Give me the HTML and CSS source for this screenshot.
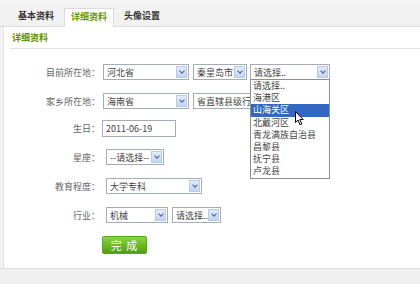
FILE: index.html
```html
<!DOCTYPE html>
<html lang="zh-CN">
<head>
  <meta charset="UTF-8" />
  <title>详细资料</title>
  <link rel="stylesheet" href="styles.css">
</head>
<body>
  <div class="tabs">
    <span class="tab">基本资料</span>
    <span class="tab active">详细资料</span>
    <span class="tab">头像设置</span>
  </div>

  <div class="panel">
    <h2 class="section-title">详细资料</h2>

    <div class="form">
      <div class="row">
        <label>目前所在地：</label>
        <div class="controls">
          <div class="select w86"><span>河北省</span><i class="arrow"></i></div>
          <div class="select w54"><span>秦皇岛市</span><i class="arrow"></i></div>
          <div class="select-wrap">
            <div class="select w80 open"><span>请选择..</span><i class="arrow"></i></div>
            <ul class="options">
              <li>请选择..</li>
              <li>海港区</li>
              <li class="hover">山海关区</li>
              <li>北戴河区</li>
              <li>青龙满族自治县</li>
              <li>昌黎县</li>
              <li>抚宁县</li>
              <li>卢龙县</li>
            </ul>
            <svg class="cursor" width="9" height="15" viewBox="0 0 9 15">
              <path d="M0.5 0.5 L0.5 11.5 L3 9 L5 13.8 L6.8 13 L4.8 8.5 L8.2 8.5 Z" fill="#fff" stroke="#000" stroke-width="1"/>
            </svg>
          </div>
        </div>
      </div>

      <div class="row">
        <label>家乡所在地：</label>
        <div class="controls">
          <div class="select w86"><span>海南省</span><i class="arrow"></i></div>
          <div class="select w80"><span>省直辖县级行政单位</span><i class="arrow"></i></div>
        </div>
      </div>

      <div class="row birthday">
        <label>生日：</label>
        <div class="controls">
          <input class="text-input" type="text" value="2011-06-19" />
        </div>
      </div>

      <div class="row">
        <label>星座：</label>
        <div class="controls indent">
          <div class="select w58"><span>--请选择--</span><i class="arrow"></i></div>
        </div>
      </div>

      <div class="row">
        <label>教育程度：</label>
        <div class="controls indent">
          <div class="select w96"><span>大学专科</span><i class="arrow"></i></div>
        </div>
      </div>

      <div class="row">
        <label>行业：</label>
        <div class="controls indent">
          <div class="select w62"><span>机械</span><i class="arrow"></i></div>
          <div class="select w49"><span>请选择..</span><i class="arrow"></i></div>
        </div>
      </div>

      <div class="row">
        <label></label>
        <div class="controls">
          <button class="submit-btn">完 成</button>
        </div>
      </div>
    </div>
  </div>

  <div class="footer"></div>
</body>
</html>
```

FILE: styles.css
```css
body {
  margin: 0;
  width: 420px;
  height: 284px;
  overflow: hidden;
  background: #f2f2f2;
  font-family: "Noto Sans CJK SC", "DejaVu Sans", sans-serif;
  font-size: 9px;
  color: #555;
}

/* tabs */
.tabs {
  display: flex;
  align-items: flex-end;
  gap: 3px;
  height: 26px;
  padding-left: 11px;
  background: linear-gradient(#f8f8f8, #f2f2f2 4px);
  border-bottom: 1px solid #dcdcdc;
}
.tab {
  box-sizing: border-box;
  width: 50px;
  height: 18px;
  line-height: 16px;
  text-align: center;
  font-weight: bold;
  color: #333;
}
.tab.active {
  height: 19px;
  margin-bottom: -1px;
  background: #fff;
  border: 1px solid #dcdcdc;
  border-bottom: none;
  color: #669a00;
  position: relative;
}

/* panel */
.panel {
  margin-left: 3px;
  height: 241px;
  background: #fff;
  border-left: 1px solid #e3e3e3;
}
.section-title {
  margin: 0 0 0 6px;
  padding: 5px 0 5px 2px;
  font-size: 9px;
  line-height: 11px;
  color: #5f9200;
  border-bottom: 1px solid #e2e2e2;
}

.form {
  padding-top: 15px;
}
.row {
  display: flex;
  align-items: center;
  min-height: 16px;
  margin-bottom: 13px;
}
.row label {
  width: 96px;
  text-align: right;
  color: #666;
  white-space: nowrap;
}
.controls {
  display: flex;
  gap: 4px;
  padding-left: 3px;
}
.controls.indent {
  padding-left: 6px;
}
.row.birthday {
  margin-top: -2px;
  margin-bottom: 12px;
}

/* selects */
.select {
  display: flex;
  align-items: center;
  box-sizing: border-box;
  height: 16px;
  padding-left: 3px;
  border: 1px solid #a5acb5;
  background: #fff;
  color: #444;
  overflow: hidden;
}
.select span {
  flex: 1;
  white-space: nowrap;
  overflow: hidden;
}
.arrow {
  box-sizing: border-box;
  width: 11px;
  height: 12px;
  margin-right: 1px;
  border: 1px solid #b9cbeb;
  background: linear-gradient(#e2ebfc, #c3d4f5);
  position: relative;
  flex: none;
}
.arrow::after {
  content: "";
  position: absolute;
  left: 3px;
  top: 2px;
  width: 3px;
  height: 3px;
  border-right: 1.5px solid #4d5f86;
  border-bottom: 1.5px solid #4d5f86;
  transform: rotate(45deg);
}
.w86 { width: 86px; }
.w54 { width: 54px; }
.w80 { width: 80px; }
.w58 { width: 58px; }
.w96 { width: 96px; }
.w62 { width: 62px; }
.w49 { width: 49px; }

.select-wrap {
  position: relative;
  margin-left: -1px;
}
.options {
  position: absolute;
  left: 0;
  top: 15px;
  width: 80px;
  box-sizing: border-box;
  margin: 0;
  padding: 0;
  list-style: none;
  background: #fff;
  border: 1px solid #8a8f99;
  color: #444;
  z-index: 2;
}
.options li {
  height: 12.2px;
  line-height: 12px;
  padding-left: 2px;
  white-space: nowrap;
}
.options li.hover {
  background: #3467c2;
  color: #fff;
}
.cursor {
  position: absolute;
  left: 45px;
  top: 47px;
  z-index: 3;
}

.text-input {
  box-sizing: border-box;
  width: 74px;
  height: 17px;
  margin: 0 0 0 -1px;
  padding: 0 3px;
  border: 1px solid #a5acb5;
  font-family: "Noto Sans CJK SC", "DejaVu Sans", sans-serif;
  font-size: 9px;
  color: #444;
}

.submit-btn {
  width: 45px;
  height: 18px;
  margin-left: -1px;
  padding: 0;
  border: 1px solid #58a81a;
  border-radius: 2px;
  background: linear-gradient(#8ad43b, #4f9f12);
  color: #fff;
  font-family: "Noto Sans CJK SC", "DejaVu Sans", sans-serif;
  font-size: 11px;
  line-height: 16px;
  letter-spacing: 1px;
}

.footer {
  height: 16px;
  border-top: 1px solid #dedede;
  background: #f0f0f0;
}
```
